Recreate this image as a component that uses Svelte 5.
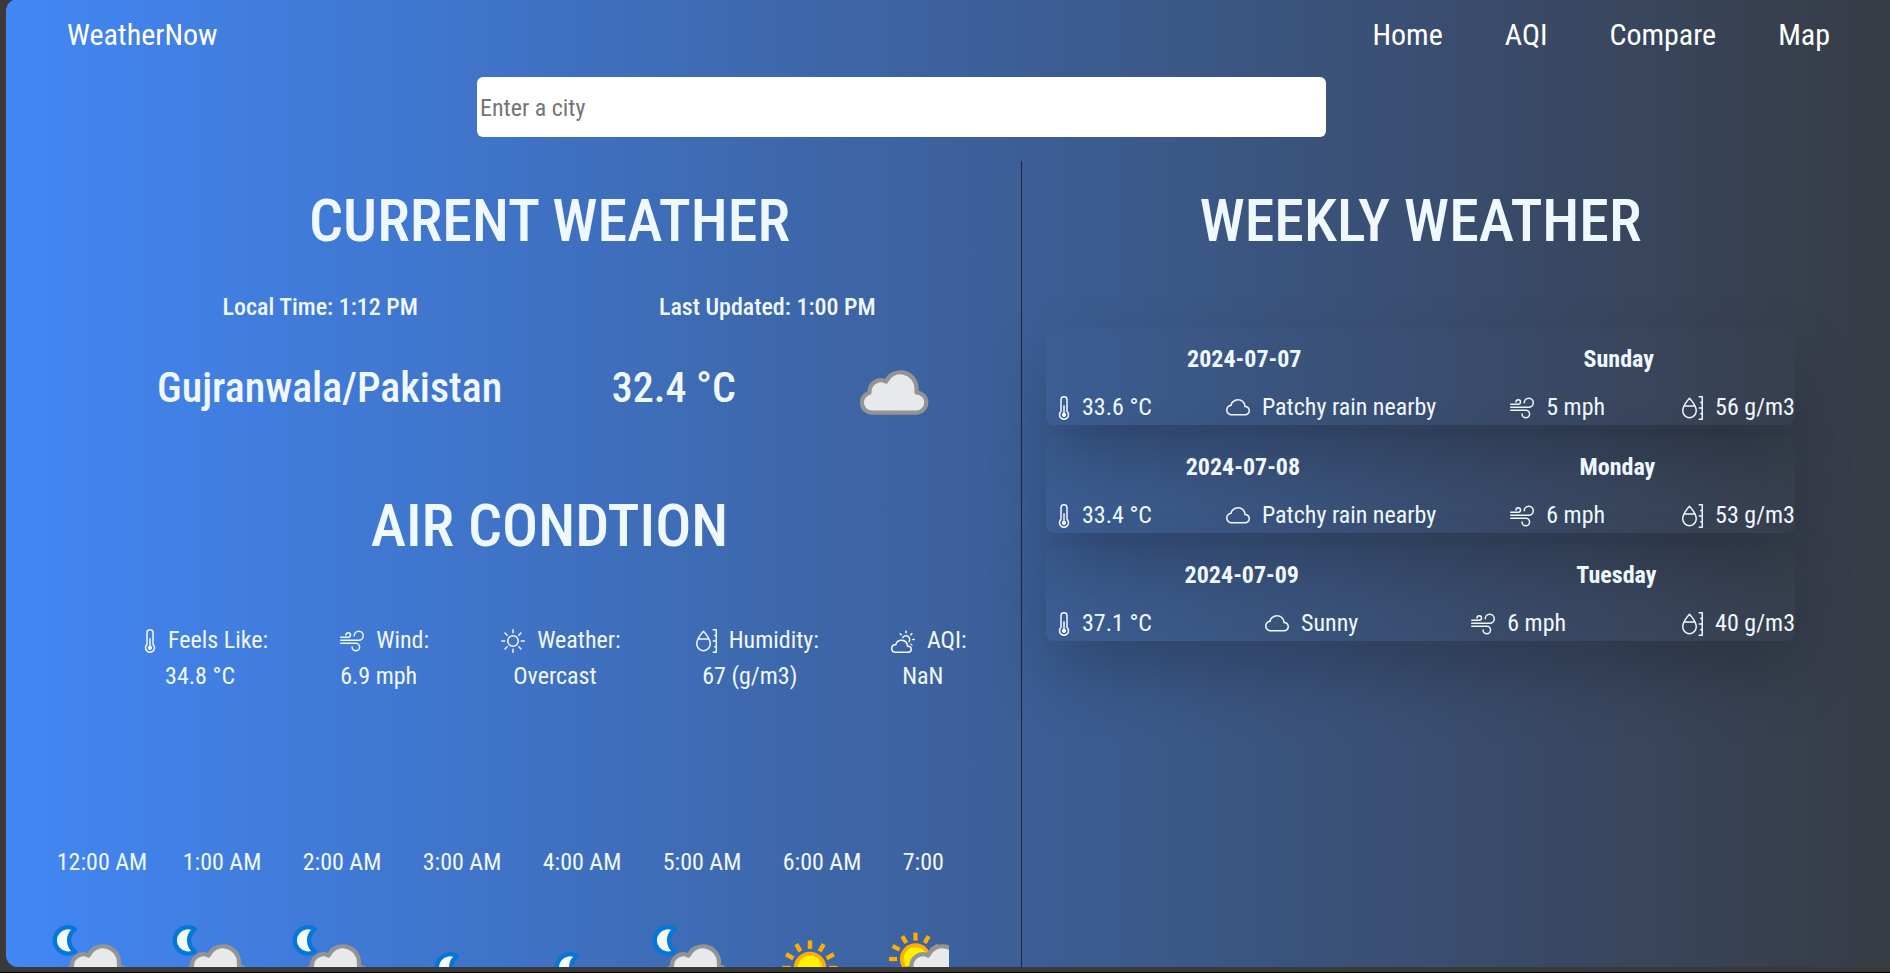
<script>
  const nav = ['Home', 'AQI', 'Compare', 'Map'];

  const icons = {
    thermo: [
      'M9.5 12.5a1.5 1.5 0 1 1-2-1.415V6.5a.5.5 0 0 1 1 0v4.585a1.5 1.5 0 0 1 1 1.415',
      'M5.5 2.5a2.5 2.5 0 0 1 5 0v7.55a3.5 3.5 0 1 1-5 0zM8 1a1.5 1.5 0 0 0-1.5 1.5v7.987l-.167.15a2.5 2.5 0 1 0 3.333 0l-.166-.15V2.5A1.5 1.5 0 0 0 8 1'
    ],
    wind: [
      'M12.5 2A2.5 2.5 0 0 0 10 4.5a.5.5 0 0 1-1 0A3.5 3.5 0 1 1 12.5 8H.5a.5.5 0 0 1 0-1h12a2.5 2.5 0 0 0 0-5m-7 1a1 1 0 0 0-1 1 .5.5 0 0 1-1 0 2 2 0 1 1 2 2h-5a.5.5 0 0 1 0-1h5a1 1 0 0 0 0-2M0 9.5A.5.5 0 0 1 .5 9h10.042a3 3 0 1 1-3 3 .5.5 0 0 1 1 0 2 2 0 1 0 2-2H.5a.5.5 0 0 1-.5-.5'
    ],
    sun: [
      'M8 11a3 3 0 1 1 0-6 3 3 0 0 1 0 6m0 1a4 4 0 1 0 0-8 4 4 0 0 0 0 8M8 0a.5.5 0 0 1 .5.5v2a.5.5 0 0 1-1 0v-2A.5.5 0 0 1 8 0m0 13a.5.5 0 0 1 .5.5v2a.5.5 0 0 1-1 0v-2A.5.5 0 0 1 8 13m8-5a.5.5 0 0 1-.5.5h-2a.5.5 0 0 1 0-1h2a.5.5 0 0 1 .5.5M3 8a.5.5 0 0 1-.5.5h-2a.5.5 0 0 1 0-1h2A.5.5 0 0 1 3 8m10.657-5.657a.5.5 0 0 1 0 .707l-1.414 1.415a.5.5 0 1 1-.707-.708l1.414-1.414a.5.5 0 0 1 .707 0m-9.193 9.193a.5.5 0 0 1 0 .707L3.05 13.657a.5.5 0 0 1-.707-.707l1.414-1.414a.5.5 0 0 1 .707 0m9.193 2.121a.5.5 0 0 1-.707 0l-1.414-1.414a.5.5 0 0 1 .707-.707l1.414 1.414a.5.5 0 0 1 0 .707M4.464 4.465a.5.5 0 0 1-.707 0L2.343 3.05a.5.5 0 1 1 .707-.707l1.414 1.414a.5.5 0 0 1 0 .708'
    ],
    moisture: [
      'M13.5 0a.5.5 0 0 0 0 1H15v2.75h-.5a.5.5 0 0 0 0 1h.5V7.5h-1.5a.5.5 0 0 0 0 1H15v2.75h-.5a.5.5 0 0 0 0 1h.5V15h-1.5a.5.5 0 0 0 0 1h2a.5.5 0 0 0 .5-.5V.5a.5.5 0 0 0-.5-.5zM7 1.5l.364-.343a.5.5 0 0 0-.728 0l-.002.002-.006.007-.022.023-.08.088a29 29 0 0 0-1.274 1.517c-.769.983-1.714 2.325-2.385 3.727C2.368 7.564 2 8.682 2 9.733 2 12.614 4.212 15 7 15s5-2.386 5-5.267c0-1.05-.368-2.169-.867-3.212-.671-1.402-1.616-2.744-2.385-3.727a29 29 0 0 0-1.354-1.605l-.022-.023-.006-.007-.002-.001zm0 0-.364-.343zm-.016.766L7 2.247l.016.019c.24.274.572.667.944 1.144.611.781 1.32 1.776 1.901 2.827H4.14c.58-1.051 1.29-2.046 1.9-2.827.373-.477.706-.87.945-1.144zM3 9.733c0-.755.244-1.612.638-2.496h6.724c.395.884.638 1.741.638 2.496C11 12.117 9.182 14 7 14s-4-1.883-4-4.267'
    ],
    cloud: [
      'M4.406 3.342A5.53 5.53 0 0 1 8 2c2.69 0 4.923 2 5.166 4.579C14.758 6.804 16 8.137 16 9.773 16 11.569 14.502 13 12.687 13H3.781C1.708 13 0 11.366 0 9.318c0-1.763 1.266-3.223 2.942-3.593.143-.863.698-1.723 1.464-2.383m.653.757c-.757.653-1.153 1.44-1.153 2.056v.448l-.445.049C2.064 6.805 1 7.952 1 9.318 1 10.785 2.23 12 3.781 12h8.906C13.98 12 15 10.988 15 9.773c0-1.216-1.02-2.228-2.313-2.228h-.5v-.5C12.188 4.825 10.328 3 8 3a4.53 4.53 0 0 0-2.941 1.1z'
    ],
    cloudSun: [
      'M7 8a3.5 3.5 0 0 1 3.5 3.555.5.5 0 0 0 .624.492A1.503 1.503 0 0 1 13 13.5a1.5 1.5 0 0 1-1.5 1.5H3a2 2 0 1 1 .1-3.998.5.5 0 0 0 .51-.375A3.5 3.5 0 0 1 7 8m4.473 3a4.5 4.5 0 0 0-8.72-.99A3 3 0 0 0 3 16h8.5a2.5 2.5 0 0 0 0-5z',
      'M10.5 1.5a.5.5 0 0 0-1 0v1a.5.5 0 0 0 1 0zm3.743 1.964a.5.5 0 1 0-.707-.707l-.708.707a.5.5 0 0 0 .708.708zm-7.779-.707a.5.5 0 0 0-.707.707l.707.708a.5.5 0 1 0 .708-.708zm1.734 3.374a2 2 0 1 1 3.296 2.198q.3.423.516.898a3 3 0 1 0-4.84-3.225q.529.017 1.028.129m4.484 4.074c.6.215 1.125.59 1.522 1.072a.5.5 0 0 0 .039-.742l-.707-.707a.5.5 0 0 0-.854.377M14.5 6.5a.5.5 0 0 0 0 1h1a.5.5 0 0 0 0-1z'
    ]
  };

  const air = [
    { icon: 'thermo', label: 'Feels Like:', value: '34.8 °C' },
    { icon: 'wind', label: 'Wind:', value: '6.9 mph' },
    { icon: 'sun', label: 'Weather:', value: 'Overcast' },
    { icon: 'moisture', label: 'Humidity:', value: '67 (g/m3)' },
    { icon: 'cloudSun', label: 'AQI:', value: 'NaN' }
  ];

  const hours = [
    { time: '12:00 AM', sky: 'moonCloud' },
    { time: '1:00 AM', sky: 'moonCloud' },
    { time: '2:00 AM', sky: 'moonCloud' },
    { time: '3:00 AM', sky: 'moon' },
    { time: '4:00 AM', sky: 'moon' },
    { time: '5:00 AM', sky: 'moonCloud' },
    { time: '6:00 AM', sky: 'sun' },
    { time: '7:00 AM', sky: 'sunCloud' }
  ];

  const week = [
    { date: '2024-07-07', day: 'Sunday', temp: '33.6 °C', text: 'Patchy rain nearby', wind: '5 mph', hum: '56 g/m3' },
    { date: '2024-07-08', day: 'Monday', temp: '33.4 °C', text: 'Patchy rain nearby', wind: '6 mph', hum: '53 g/m3' },
    { date: '2024-07-09', day: 'Tuesday', temp: '37.1 °C', text: 'Sunny', wind: '6 mph', hum: '40 g/m3' }
  ];

  const rays = [0, 30, 60, 90, 120, 150, 180, 210, 240, 270, 300, 330];
</script>

{#snippet icon(name)}
  <svg class="icon" viewBox="0 0 16 16" fill="currentColor">
    {#each icons[name] as d}<path {d} />{/each}
  </svg>
{/snippet}

{#snippet cloudShape()}
  <path
    d="M12 42.600A10.100 10.100 0 0 1 9.500 22.700A11.500 11.500 0 0 1 26 11.500A16 16 0 0 1 56.500 18V22.500A10.050 10.050 0 0 1 56 42.600Z"
    fill="#e8e9ea" stroke="#949494" stroke-width="4.200" stroke-linejoin="round" />
{/snippet}

{#snippet moonShape()}
  <path d="M22 4.200A13.200 13.200 0 1 0 22 26.500A13.500 13.500 0 0 1 22 4.200Z" fill="#f2fbff" stroke="#0577d8" stroke-width="4.300" stroke-linejoin="round" />
{/snippet}

{#snippet sunShape()}
  {#each rays as a}
    <rect x="-2.2" y="-27.5" width="4.400" height="8.300" fill="#ffae00" transform="rotate({a})" />
  {/each}
  <circle r="14.300" fill="#fff200" stroke="#ffae00" stroke-width="4" />
{/snippet}

{#snippet sky(kind)}
  <svg class="sky" viewBox="0 0 96 96">
    {#if kind === 'moonCloud'}
      <g transform="translate(11 5)">{@render moonShape()}</g>
      <g transform="translate(20.500 24)">{@render cloudShape()}</g>
    {:else if kind === 'moon'}
      <g transform="translate(33 32)">{@render moonShape()}</g>
    {:else if kind === 'sun'}
      <g transform="translate(48 48)">{@render sunShape()}</g>
    {:else}
      <g transform="translate(33.500 39) scale(.96)">{@render sunShape()}</g>
      <g transform="translate(20 24)">{@render cloudShape()}</g>
    {/if}
  </svg>
{/snippet}

<div class="page">
  <div class="panel">
    <header>
      <span class="brand">WeatherNow</span>
      <nav>
        {#each nav as n}<a href="#top">{n}</a>{/each}
      </nav>
    </header>

    <input type="text" placeholder="Enter a city" />

    <main>
      <section class="current">
        <h1>CURRENT WEATHER</h1>
        <div class="times">
          <span>Local Time: 1:12 PM</span>
          <span>Last Updated: 1:00 PM</span>
        </div>
        <div class="now">
          <span class="place">Gujranwala/Pakistan</span>
          <span class="temp">32.4 °C</span>
          <svg class="now-sky" viewBox="0 0 69 46">{@render cloudShape()}</svg>
        </div>

        <h1 class="air-title">AIR CONDTION</h1>
        <div class="air">
          {#each air as a}
            <div class="cond {a.icon}">
              <div class="label">{@render icon(a.icon)}<span>{a.label}</span></div>
              <div class="value">{a.value}</div>
            </div>
          {/each}
        </div>

        <div class="hours">
          {#each hours as h}
            <div class="hour">
              <span class="time">{h.time}</span>
              {@render sky(h.sky)}
            </div>
          {/each}
        </div>
      </section>

      <section class="weekly">
        <h1>WEEKLY WEATHER</h1>
        <div class="days">
          {#each week as w}
            <article>
              <div class="head"><b>{w.date}</b><b>{w.day}</b></div>
              <div class="facts">
                <span class="fact thermo">{@render icon('thermo')}{w.temp}</span>
                <span class="fact">{@render icon('cloud')}{w.text}</span>
                <span class="fact">{@render icon('wind')}{w.wind}</span>
                <span class="fact">{@render icon('moisture')}{w.hum}</span>
              </div>
            </article>
          {/each}
        </div>
      </section>
    </main>
  </div>
</div>

<style>
  :global(body) {
    margin: 0;
    background: #3a3a3a;
    overflow: hidden;
  }
  .page {
    box-sizing: border-box;
    width: 1890px;
    height: 973px;
    overflow: hidden;
    padding-left: 6px;
    border-bottom: 1px solid #000;
    font-family: 'Roboto Condensed', Roboto, sans-serif;
    font-stretch: 75%;
    font-size: 24px;
    line-height: 36px;
    color: aliceblue;
  }
  .panel {
    box-sizing: border-box;
    width: 1892px;
    height: 968px;
    margin-top: -1px;
    padding-top: 1px;
    border-radius: 12px;
    overflow: hidden;
    background: linear-gradient(to right, #4287f5, #373b44);
  }
  header {
    display: flex;
    justify-content: space-between;
    box-sizing: border-box;
    height: 77px;
    padding: 17px 68px 0 61px;
    font-size: 30px;
    color: #fff;
  }
  nav {
    display: flex;
    gap: 62px;
  }
  a {
    color: #fff;
    text-decoration: none;
  }
  input {
    display: block;
    box-sizing: border-box;
    width: 849px;
    height: 60px;
    margin: 0 0 0 471px;
    padding: 2px 3px 0;
    border: 0;
    border-radius: 6px;
    background: #fff;
    font: inherit;
  }
  input::placeholder {
    color: #757575;
  }
  main {
    display: flex;
    height: 806px;
    margin-top: 24px;
  }
  h1 {
    margin: 0;
    font-size: 60px;
    line-height: 72px;
    font-weight: 500;
    text-align: center;
    white-space: nowrap;
  }
  .current {
    box-sizing: border-box;
    flex: none;
    width: 1016px;
    padding: 24px 0 0 36px;
    border-right: 1px solid #1b2740;
  }
  .current h1 {
    margin-left: 36px;
    width: 943px;
  }
  .times {
    display: flex;
    margin: 32px 0 0 180.5px;
    gap: 241px;
    font-weight: 500;
    white-space: nowrap;
  }
  .now {
    display: flex;
    align-items: center;
    height: 72px;
    margin: 27px 0 0 115px;
    font-size: 42px;
    font-weight: 500;
    white-space: nowrap;
  }
  .temp {
    margin-left: 109.5px;
  }
  .now-sky {
    width: 69px;
    height: 46px;
    margin: 10px 0 0 124.5px;
  }
  .current .air-title {
    margin-top: 66px;
  }
  .air {
    display: flex;
    height: 72px;
    margin: 60px 0 0 96px;
    gap: 72px;
    white-space: nowrap;
  }
  .label {
    display: flex;
  }
  .icon {
    flex: none;
    width: 24px;
    height: 24px;
    margin: 7px 12px 0 0;
  }
  .thermo .icon {
    margin-right: 6px;
  }
  .value {
    padding-right: 12px;
    text-align: center;
  }
  .thermo .value {
    padding-right: 6px;
  }
  .hours {
    display: flex;
    width: 907px;
    height: 140px;
    margin-top: 150px;
    overflow: hidden;
  }
  .hour {
    display: flex;
    flex: none;
    flex-direction: column;
    width: 120px;
  }
  .time {
    text-align: center;
    white-space: nowrap;
  }
  .sky {
    flex: none;
    width: 96px;
    height: 96px;
    margin-top: 39.5px;
  }
  .weekly {
    flex: 1;
    padding-top: 24px;
  }
  .weekly h1 {
    width: 797px;
  }
  .days {
    display: flex;
    flex-direction: column;
    gap: 12px;
    width: 749px;
    margin: 72px 0 0 24px;
  }
  article {
    height: 96px;
    border-radius: 8px;
    box-shadow: 0 33px 66px rgba(0, 0, 0, 0.21);
  }
  .head {
    display: flex;
    justify-content: space-around;
    padding-top: 12px;
  }
  .facts {
    display: flex;
    justify-content: space-between;
    padding: 12px 0 0 6px;
    white-space: nowrap;
  }
  .fact {
    display: flex;
  }
</style>
